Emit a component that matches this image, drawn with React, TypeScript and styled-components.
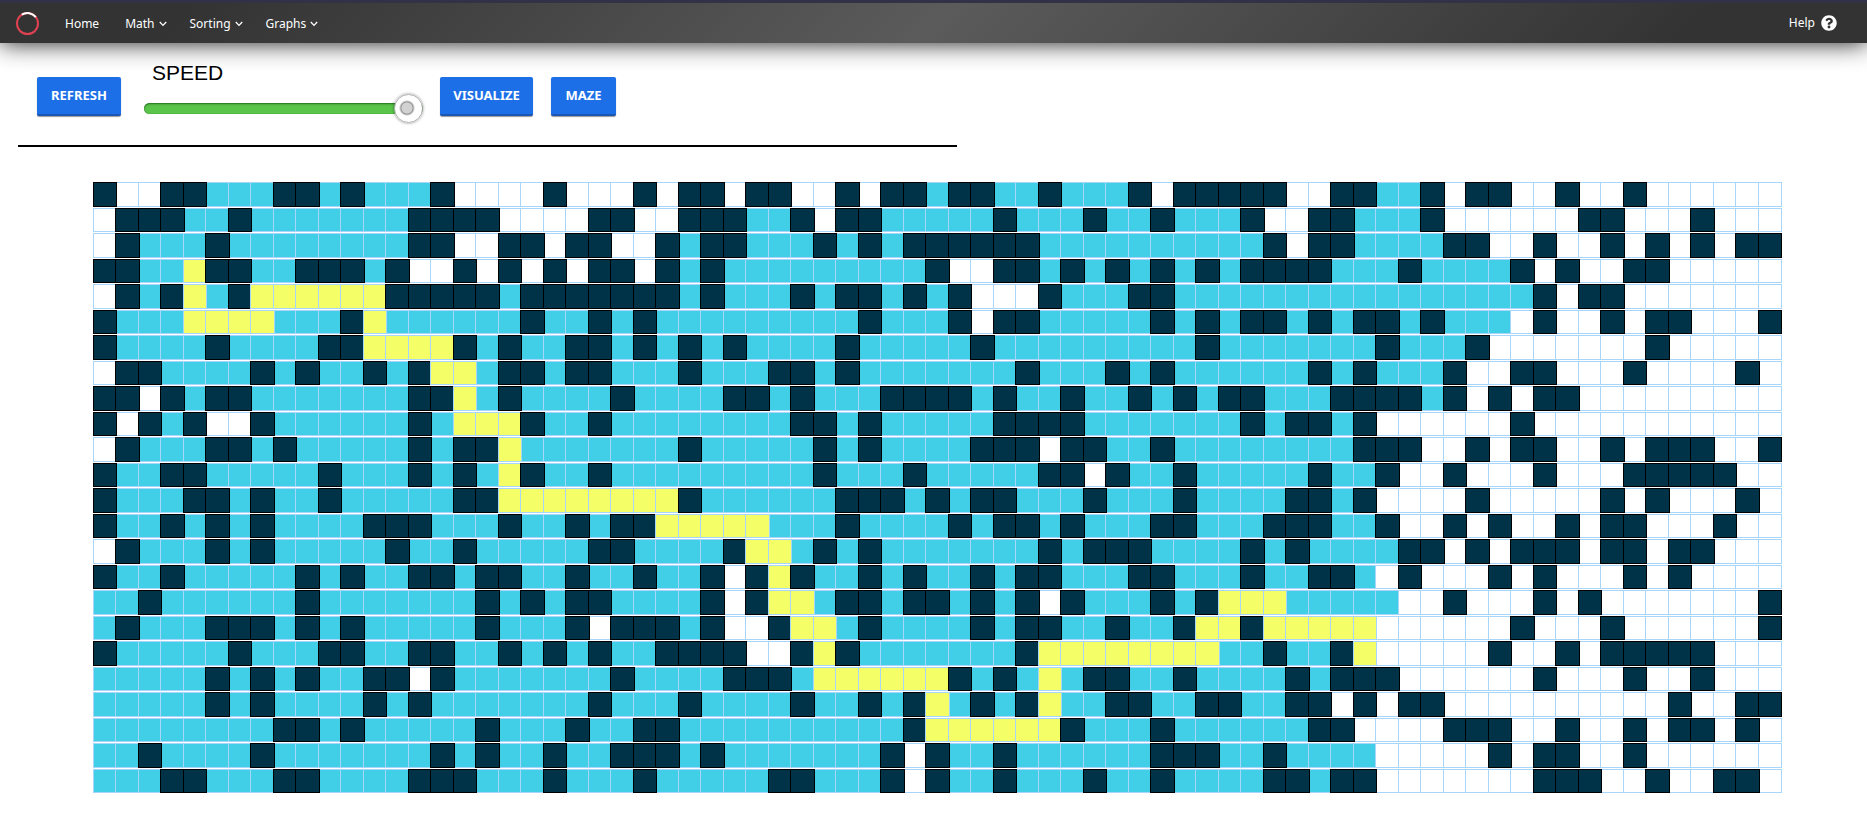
import React, { useState } from "react";
import styled, { createGlobalStyle, css } from "styled-components";

const GlobalStyle = createGlobalStyle`
  * { box-sizing: border-box; }
  body {
    margin: 0;
    background: #fff;
    font-family: "Noto Sans", "Open Sans", sans-serif;
  }
`;

const NavBar = styled.nav`
  display: flex;
  align-items: center;
  height: 43px;
  padding: 0 30px 0 15px;
  border-top: 3px solid #333146;
  background: linear-gradient(135deg, #333 10%, #5b5b5b 50%, #333 90%);
  box-shadow: 0 0 25px 0 rgba(0, 0, 0, 0.9);
`;

const LogoLink = styled.a`
  display: flex;
  margin-right: 25px;
`;

const NavLink = styled.a`
  color: #fff;
  font-size: 12px;
  line-height: 16px;
  text-decoration: none;
`;

const MenuButton = styled.button`
  display: flex;
  align-items: center;
  gap: 4px;
  margin-left: 23px;
  padding: 2px 0 0;
  border: 0;
  background: none;
  color: #fff;
  font-family: inherit;
  font-size: 12px;
  line-height: 16px;
  cursor: pointer;
`;

const HomeLink = styled(NavLink)`
  margin-right: 3px;
  padding-top: 2px;
`;

const HelpLink = styled(NavLink)`
  display: flex;
  align-items: center;
  gap: 6px;
  margin-left: auto;
`;

const Controls = styled.section`
  display: flex;
  align-items: flex-start;
  width: calc(50% + 5px);
  height: 104px;
  margin-left: 18px;
  padding: 14px 19px 0;
  border-bottom: 2px solid #000;
`;

const ActionButton = styled.button<{ $width: number }>`
  width: ${(p) => p.$width}px;
  height: 39px;
  margin-top: 20px;
  padding: 0 0 2px;
  border: 0;
  border-bottom: 2px solid #1a56b4;
  border-radius: 2px;
  background: #1d6fe8;
  box-shadow: 0 1px 1px rgba(0, 0, 0, 0.4);
  color: #fff;
  font-family: inherit;
  font-size: 13px;
  font-weight: 700;
  line-height: 16px;
  text-transform: uppercase;
  cursor: pointer;

  & + & {
    margin-left: 18px;
  }
`;

const SpeedControl = styled.div`
  display: flex;
  flex-direction: column;
  width: 279px;
  margin: 0 17px 0 23px;
`;

const SpeedLabel = styled.label`
  padding-left: 8px;
  font-family: "Liberation Sans", Arial, sans-serif;
  font-size: 21px;
  line-height: 32px;
  color: #000;
`;

const SpeedSlider = styled.input`
  appearance: none;
  width: 100%;
  height: 30px;
  margin: 4px 0 0;
  background: transparent;
  cursor: pointer;

  &::-webkit-slider-runnable-track {
    height: 11px;
    border-radius: 6px;
    background: #5ac44b;
    box-shadow: inset 0 1px 2px rgba(0, 60, 0, 0.6), inset 0 0 1px rgba(0, 60, 0, 0.4);
  }

  &::-webkit-slider-thumb {
    appearance: none;
    width: 29px;
    height: 29px;
    margin-top: -9px;
    border: 1px solid #b0b0b0;
    border-radius: 50%;
    background: radial-gradient(circle at 12px 13px, #d2d2d2 5px, #969696 6px, #969696 6px, #fff 8px);
    box-shadow: 0 0 3px rgba(0, 0, 0, 0.45);
  }
`;

const Board = styled.main`
  display: grid;
  grid-template-rows: repeat(24, 1fr);
  row-gap: 1px;
  aspect-ratio: 1687 / 611;
  margin: 35px 87px 24px 93px;
`;

const BoardRow = styled.div`
  display: grid;
  grid-template-columns: repeat(75, 1fr);
  min-height: 0;
`;

type CellKind = "wall" | "visited" | "path" | "empty";

const kindStyles = {
  wall: css`
    position: relative;
    z-index: 1;
    border-color: #000;
    background: #003347;
  `,
  visited: css`
    background: #40cfe6;
  `,
  path: css`
    position: relative;
    z-index: 1;
    background: #f4ff67;
  `,
  empty: css`
    background: #fff;
  `,
};

/* Each cell reaches over its right neighbour so that the two share one border. */
const Cell = styled.div<{ $kind: CellKind }>`
  margin-right: -2px;
  border: 1px solid #a8d5fa;
  ${(p) => kindStyles[p.$kind]}
`;

const kinds: Record<string, CellKind> = { "#": "wall", v: "visited", y: "path", ".": "empty" };

const maze = [
  "#..##vvv##v#vvv#....#...#" + ".##.##..#.##v##vv#vvv#.##" + "###..##vv#.##..#..#......",
  ".###vv#vvvvvvv####....##." + ".###vv#.##vvvvv#vvv#vv#vv" + "v#..##vvv#......##...#...",
  ".#vvv#vvvvvvvv##..##.##.." + "#v##vvv#v#v######vvvvvvvv" + "vv#.##vvvv##..#..#.#.#.##",
  "##vvy##vv###v#..#.#.#.##." + "#v#vvvvvvvvv#..##v#v#v#v#" + "v####vvv#vvvv#.#..##.....",
  ".#v#yv#yyyyyy#####v######" + "#v#vvv#v##v#v#...#vvv##vv" + "vvvvvvvvvvvvvv#.##.......",
  "#vvvyyyyvvv#yvvvvvv#vv#v#" + "vvvvvvvvv#vvv#.##vvvvv#v#" + "v##v#v##v#vvv.#..#.##...#",
  "#vvvv#vvvv##yyyy#v#vv##v#" + "v#v#vvvv#vvvvv#vvvvvvvvv#" + "vvvvvvv#vvv#.......#.....",
  ".##vvvv#v#vv#v#yyv##v##vv" + "v#vvv##v#vvvvvvv#vvv#v#vv" + "vvvv#v#vvv#..##...#....#.",
  "##.#v##vvvvvvv##yv#vvvv#v" + "vvv##v#vvv####v#vv#vv#v#v" + "##vvv####v#.#.##.........",
  "#.#v#..#vvvvvv#vyyy#vv#vv" + "vvvvvv##v#vvvvv####vvvvvv" + "v#v##v#......#...........",
  ".#vvv##v#vvvvv#v##yvvvvvv" + "v#vvvvv#v#vvvv###.##vv#vv" + "vvvvvv###..#.##..#.###..#",
  "#vv##vvvvv#vvv#v#vy#vv#vv" + "vvvvvvv#vvv#vvvvv##.#vv#v" + "vvvv#vv#..#...#...#####..",
  "#vvv##v#vv#vvvvv##yyyyyyy" + "y#vvvvvv###v#v##vvv#vvv#v" + "vvv##v#....#.....#.#...#.",
  "#vv#v#v#vvvv###vvv#vv#v##" + "yyyyyvvv#vvvv#v##v#vvv##v" + "vv###vv#..#.#..#.##...#..",
  ".#vvv#v#vvvvv#vv#vvvvv##v" + "vvv#yyv#v#vvvvvvv#v###vvv" + "v#v#vvvv##.#.###.##.##...",
  "#vv#vvvvv#v#vv##v##vv#vv#" + "vv#.#y#vv#v#vv#v##vvv##vv" + "v#vv##v.#...#.#...#.#....",
  "vv#vvvvvv#vvvvvvv#v#v##vv" + "vv#.#yyv##v##v#v#.#vvv#v#" + "yyyvvvvv..#...#.#.......#",
  "v#vvv###v#v#vvvvv#vvv#.##" + "#v#..#yyv#vvvv#v##vv#vv#y" + "y#yyyyy......#...#......#",
  "#vvvvv#vvv##vv##vv#v#v#vv" + "####..#y#vvvvvvv#yyyyyyyy" + "vv#vv#y.....#..#.#####...",
  "vvvvv#v#v#vv##.#vvvvvvv#v" + "vvv###vyyyyyy#v#vyv##vv#v" + "vvv#v###......#...#..#...",
  "vvvvv#v#vvvv#v#vvvvvvv#vv" + "v#vvvv#vv#v#yv#v#yvv##vv#" + "#vv##.#.##..........#..##",
  "vvvvvvvv##v#vvvvv#vvv#vv#" + "#vvvvvvvvvv#yyyyyy#vvv#vv" + "vvvv##....###..#..#.##.#.",
  "vv#vvvv#vvvvvvv#v#vv#vv##" + "#v#vvvvvvv#.#vv#vvvvvv###" + "vv#vvvv.....#.##..#......",
  "vvv##vvv##vvvv###vvv#vvv#" + "vvvvv##vvv#.#vv#vvv#vv#vv" + "vv##v##.......###..#..##.",
];

const Chevron = () => (
  <svg width="8" height="6" viewBox="0 0 8 6" fill="none" stroke="#fff" strokeWidth="1.3" aria-hidden="true">
    <path d="M0.8 1 L4 4.4 L7.2 1" />
  </svg>
);

const Logo = () => (
  <svg width="25" height="25" viewBox="0 0 25 25" fill="none" strokeWidth="2" aria-hidden="true">
    <circle cx="12.5" cy="12.5" r="10.5" stroke="#e04252" />
    <path d="M6.8 3.7 A10.5 10.5 0 0 1 20.8 6.2" stroke="#fff" />
  </svg>
);

const HelpIcon = () => (
  <svg width="16" height="16" viewBox="0 0 512 512" fill="#fff" aria-hidden="true">
    <path d="M504 256c0 137-111 248-248 248S8 393 8 256 119 8 256 8s248 111 248 248zM262.700 90c-54.500 0-89.300 23-116.500 63.800-3.500 5.300-2.400 12.400 2.700 16.300l34.700 26.300c5.200 3.900 12.600 3 16.700-2.100 17.900-22.700 30.100-35.800 57.300-35.800 20.400 0 45.700 13.100 45.700 33 0 15-12.400 22.700-32.500 34C247.100 238.500 216 254.900 216 296v4c0 6.600 5.400 12 12 12h56c6.600 0 12-5.400 12-12v-1.300c0-28.500 83.200-29.600 83.200-106.700 0-58-60.200-102-116.500-102zM256 338c-25.400 0-46 20.600-46 46s20.600 46 46 46 46-20.600 46-46-20.600-46-46-46z" />
  </svg>
);

export default function App() {
  const [speed, setSpeed] = useState(100);

  return (
    <>
      <GlobalStyle />
      <NavBar>
        <LogoLink href="#" aria-label="Start page">
          <Logo />
        </LogoLink>
        <HomeLink href="#">Home</HomeLink>
        {["Math", "Sorting", "Graphs"].map((name) => (
          <MenuButton key={name} type="button">
            {name}
            <Chevron />
          </MenuButton>
        ))}
        <HelpLink href="#">
          Help
          <HelpIcon />
        </HelpLink>
      </NavBar>
      <Controls>
        <ActionButton type="button" $width={84}>Refresh</ActionButton>
        <SpeedControl>
          <SpeedLabel htmlFor="speed">SPEED</SpeedLabel>
          <SpeedSlider
            id="speed"
            type="range"
            min={0}
            max={100}
            value={speed}
            onChange={(e) => setSpeed(Number(e.target.value))}
          />
        </SpeedControl>
        <ActionButton type="button" $width={93}>Visualize</ActionButton>
        <ActionButton type="button" $width={65}>Maze</ActionButton>
      </Controls>
      <Board>
        {maze.map((row, y) => (
          <BoardRow key={y}>
            {row.split("").map((mark, x) => (
              <Cell key={x} $kind={kinds[mark]} />
            ))}
          </BoardRow>
        ))}
      </Board>
    </>
  );
}
